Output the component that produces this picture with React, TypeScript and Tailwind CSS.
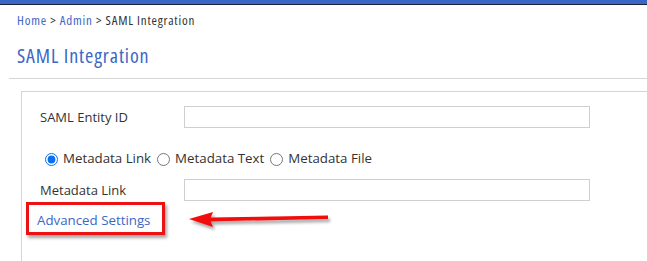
import React from 'react';

const font = { fontFamily: '"Open Sans", "Liberation Sans", sans-serif' };

function FieldRow({ label }: { label: string }) {
  return (
    <div className="flex items-center h-[22px]">
      <span className="w-[144px] text-[13px] text-[#333] pt-[2px]">{label}</span>
      <input
        type="text"
        className="w-[406px] h-[22px] border border-[#cfcfcf] bg-white outline-none"
      />
    </div>
  );
}

function Radio({ label, checked }: { label: string; checked?: boolean }) {
  return (
    <label className="flex items-center">
      <input
        type="radio"
        name="metadata"
        defaultChecked={checked}
        className="m-0 w-[13px] h-[13px] mr-[5px] accent-[#0b6ff0]"
      />
      <span className="text-[13.3px] text-[#333] mr-[6px]">{label}</span>
    </label>
  );
}

export default function App() {
  return (
    <div className="relative w-[647px] h-[261px] overflow-hidden bg-white" style={font}>
      <div className="h-[4px] bg-[#3a66c4]" />
      <div className="h-[1px] bg-[#1c2538]" />

      <div className="pl-[17px] pt-[6px] text-[13px] leading-[18px] text-[#333] [font-stretch:75%] tracking-[0.8px]">
        <span className="text-[#3b67c6]">Home</span> &gt;{' '}
        <span className="text-[#3b67c6]">Admin</span> &gt; SAML Integration
      </div>

      <h1 className="pl-[17px] pt-[15px] text-[20px] leading-[24px] text-[#3b67c6] [font-stretch:75%] tracking-[0.9px]">
        SAML Integration
      </h1>

      <div className="ml-[9px] mt-[10px] h-[1px] bg-[#d6d6d6]" />

      <div className="ml-[21px] mt-[12px] h-[200px] border-l border-t border-[#d4d4d4] pl-[18px] pt-[14px]">
        <FieldRow label="SAML Entity ID" />

        <div className="flex items-center mt-[23px] ml-[5px] h-[16px]">
          <Radio label="Metadata Link" checked />
          <Radio label="Metadata Text" />
          <Radio label="Metadata File" />
        </div>

        <div className="mt-[12px]">
          <FieldRow label="Metadata Link" />
        </div>

        <div className="mt-[11px] -ml-[3px] h-[18px] flex items-center">
          <span className="text-[13.3px] text-[#3b67c6]">Advanced Settings</span>
        </div>
      </div>

      {/* annotation: red box */}
      <div className="absolute left-[26px] top-[202px] w-[139px] h-[33px] border-[3px] border-[#ee1111] shadow-[2px_3px_3px_rgba(0,0,0,0.35)]" />

      {/* annotation: arrow */}
      <svg
        className="absolute left-[185px] top-[205px]"
        width="152"
        height="30"
        viewBox="0 0 152 30"
      >
        <defs>
          <filter id="sh" x="-10%" y="-50%" width="120%" height="200%">
            <feDropShadow dx="2" dy="3" stdDeviation="1.5" floodColor="#000" floodOpacity="0.35" />
          </filter>
        </defs>
        <g filter="url(#sh)" fill="#f20d0d">
          <polygon points="4,14 28,7 25,14.5 28,22" />
          <polygon points="24,12.6 143,10.4 143,14 24,16.4" />
        </g>
      </svg>
    </div>
  );
}
